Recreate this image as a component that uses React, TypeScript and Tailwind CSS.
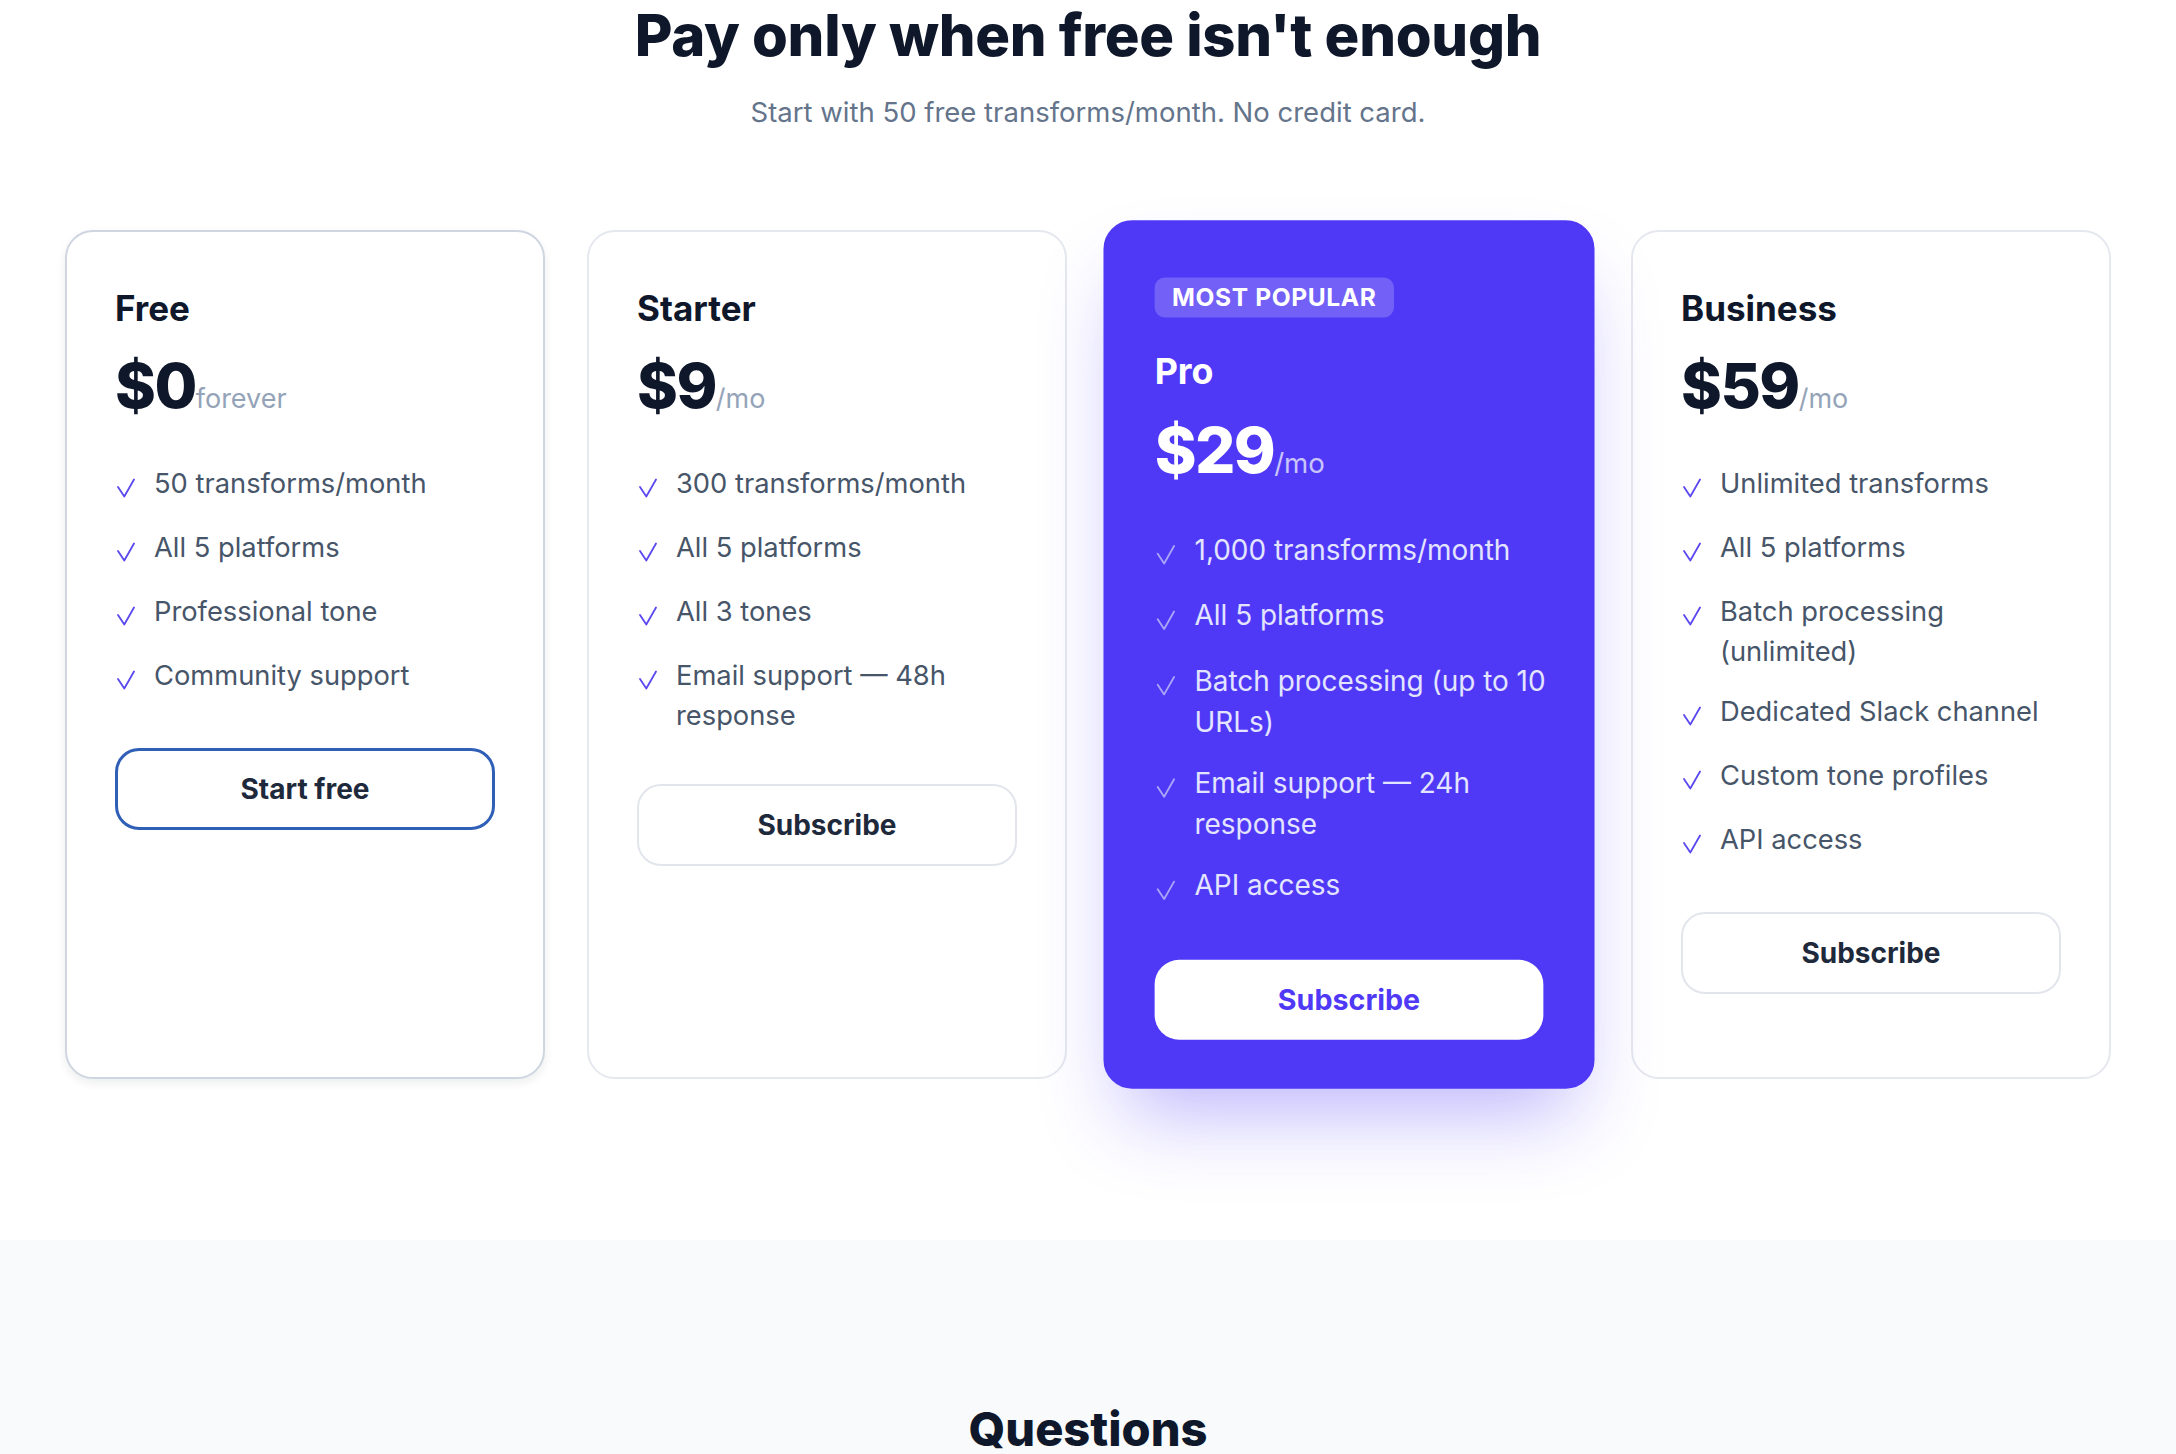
import clsx from "clsx";

interface Plan {
    name: string;
    price: string;
    unit: string;
    features: string[];
    cta: string;
    popular?: boolean;
    focused?: boolean;
}

const plans: Plan[] = [
    {
        name: "Free",
        price: "$0",
        unit: "forever",
        features: ["50 transforms/month", "All 5 platforms", "Professional tone", "Community support"],
        cta: "Start free",
        focused: true,
    },
    {
        name: "Starter",
        price: "$9",
        unit: "/mo",
        features: ["300 transforms/month", "All 5 platforms", "All 3 tones", "Email support — 48h response"],
        cta: "Subscribe",
    },
    {
        name: "Pro",
        price: "$29",
        unit: "/mo",
        features: [
            "1,000 transforms/month",
            "All 5 platforms",
            "Batch processing (up to 10 URLs)",
            "Email support — 24h response",
            "API access",
        ],
        cta: "Subscribe",
        popular: true,
    },
    {
        name: "Business",
        price: "$59",
        unit: "/mo",
        features: [
            "Unlimited transforms",
            "All 5 platforms",
            "Batch processing (unlimited)",
            "Dedicated Slack channel",
            "Custom tone profiles",
            "API access",
        ],
        cta: "Subscribe",
    },
];

function Check({ light }: { light?: boolean }) {
    return (
        <svg
            className={clsx("mt-[14px] h-[20px] w-[20px] shrink-0", light ? "text-[#a9a6f8]" : "text-[#5a48f0]")}
            viewBox="0 0 20 20"
            fill="none"
        >
            <path
                d="M3 9 L9.3 18.5 L19 1.5"
                stroke="currentColor"
                strokeWidth="1.8"
                strokeLinecap="round"
                strokeLinejoin="round"
            />
        </svg>
    );
}

function PlanCard({ plan }: { plan: Plan }) {
    const pro = !!plan.popular;
    return (
        <div
            className={clsx(
                "rounded-[28px] border-2 px-[48px] pt-[54px] pb-[46px]",
                pro
                    ? "relative z-10 scale-[1.023] border-[#4f39f6] bg-[#4f39f6] shadow-[0_44px_80px_-22px_rgba(79,57,246,0.38)]"
                    : "bg-white",
                plan.focused
                    ? "border-[#cfd6e1] shadow-[0_4px_10px_rgba(15,23,42,0.08)]"
                    : !pro && "border-[#e6e8ef]"
            )}
        >
            {pro && (
                <div className="mb-[30px] flex h-[39px] w-fit items-center rounded-[10px] bg-white/20 px-[17px] text-[24px] font-bold tracking-wide text-white">
                    MOST POPULAR
                </div>
            )}
            <h3 className={clsx("text-[35px] leading-[44px] font-bold", pro ? "text-white" : "text-[#0f172a]")}>
                {plan.name}
            </h3>
            <div className="mt-[22px] flex h-[68px] items-baseline">
                <span
                    className={clsx(
                        "text-[62px] leading-[68px] font-extrabold tracking-tight",
                        pro ? "text-white" : "text-[#0f172a]"
                    )}
                >
                    {plan.price}
                </span>
                <span className={clsx("text-[27px]", pro ? "text-[#c9c5fb]" : "text-[#94a3b8]")}>
                    {plan.unit}
                </span>
            </div>
            <ul className="mt-[44px] flex flex-col gap-[20px]">
                {plan.features.map((f) => (
                    <li key={f} className="flex min-h-[44px] items-start">
                        <Check light={pro} />
                        <span
                            className={clsx(
                                "ml-[19px] mr-[-8px] text-[27.3px] leading-[40px]",
                                pro ? "text-[#e3e4ff]" : "text-[#475569]"
                            )}
                        >
                            {f}
                        </span>
                    </li>
                ))}
            </ul>
            <button
                className={clsx(
                    "mt-[48px] flex w-full items-center justify-center rounded-[24px] text-[28px] font-bold",
                    pro
                        ? "h-[78px] bg-white text-[#4f39f6]"
                        : "h-[82px] bg-white text-[#1e293b]",
                    plan.focused && "border-[3px] border-[#2f5fb7]",
                    !pro && !plan.focused && "border-2 border-[#e2e5ec]"
                )}
            >
                {plan.cta}
            </button>
        </div>
    );
}

export default function App() {
    return (
        <div className="min-h-screen bg-white font-['Inter','Noto_Sans',sans-serif] antialiased">
            <section className="pb-[161px]">
                <h2 className="text-center text-[58px] leading-[70px] font-extrabold tracking-[-0.005em] text-[#0f172a]">
                    Pay only when free isn't enough
                </h2>
                <p className="mt-[22px] text-center text-[27.5px] leading-[40px] text-[#64748b]">
                    Start with 50 free transforms/month. No credit card.
                </p>
                <div className="mx-auto mt-[98px] grid w-[2046px] grid-cols-4 gap-[42px]">
                    {plans.map((p) => (
                        <PlanCard key={p.name} plan={p} />
                    ))}
                </div>
            </section>
            <section className="bg-[#f8fafc] pt-[161px] pb-[240px]">
                <h2 className="text-center text-[47px] leading-[56px] font-extrabold text-[#0f172a]">
                    Questions
                </h2>
            </section>
        </div>
    );
}
